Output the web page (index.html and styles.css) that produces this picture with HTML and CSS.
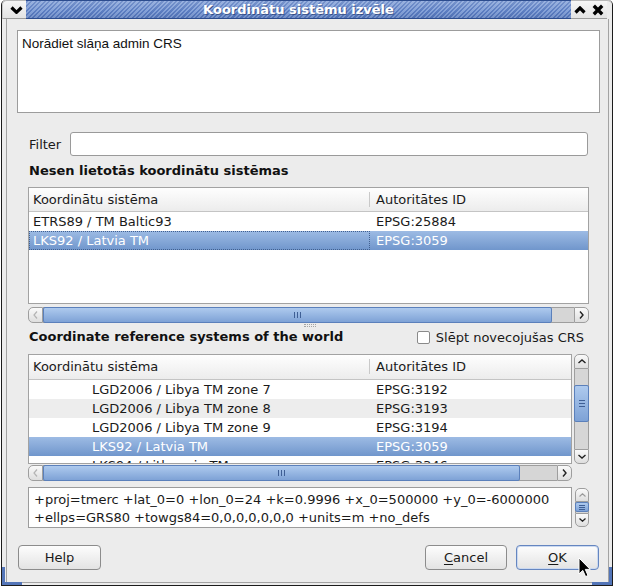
FILE: index.html
```html
<!DOCTYPE html>
<html lang="lv">
<head>
    <meta charset="UTF-8">
    <title>Koordinātu sistēmu izvēle</title>
    <link rel="stylesheet" href="styles.css">
</head>
<body>
    <div class="window">
        <div class="titlebar">
            <div class="tb-button tb-menu">
                <svg width="13" height="8" viewBox="0 0 13 8"><path d="M1.5 1.5 6.5 6.3 11.5 1.5" fill="none" stroke="#000" stroke-width="3.2"/></svg>
            </div>
            <div class="tb-title">Koordinātu sistēmu izvēle</div>
            <div class="tb-button">
                <svg width="12" height="8" viewBox="0 0 12 8"><path d="M1.5 6.5 6 2 10.5 6.5" fill="none" stroke="#000" stroke-width="3.2"/></svg>
            </div>
            <div class="tb-button">
                <svg width="12" height="12" viewBox="0 0 12 12"><path d="M1.8 1.8 10.2 10.2 M10.2 1.8 1.8 10.2" fill="none" stroke="#000" stroke-width="3.4"/></svg>
            </div>
            <div class="tb-tail"></div>
        </div>

        <div class="client">
            <div class="message">Norādiet slāņa admin CRS</div>

            <div class="panel">
                <div class="filter-row">
                    <span class="filter-label">Filter</span>
                    <div class="line-edit"></div>
                </div>

                <h2 class="group-title">Nesen lietotās koordinātu sistēmas</h2>

                <div class="tree tree-recent">
                    <div class="tree-header">
                        <div class="col col-name">Koordinātu sistēma</div>
                        <div class="col col-id">Autoritātes ID</div>
                    </div>
                    <div class="row">
                        <div class="col col-name">ETRS89 / TM Baltic93</div>
                        <div class="col col-id">EPSG:25884</div>
                    </div>
                    <div class="row selected">
                        <div class="col col-name focus">LKS92 / Latvia TM</div>
                        <div class="col col-id">EPSG:3059</div>
                    </div>
                </div>

                <div class="hscroll">
                    <div class="sb-btn sb-left">
                        <svg width="5" height="8" viewBox="0 0 5 8"><path d="M4 0.5 1 4 4 7.5" fill="none" stroke="#b4b4b4" stroke-width="1.2"/></svg>
                    </div>
                    <div class="sb-track">
                        <div class="sb-handle" style="width: 509px">
                            <svg width="7" height="6" viewBox="0 0 7 6"><path d="M0.5 0v6M3.5 0v6M6.5 0v6" stroke="#3f5f95" stroke-width="1"/></svg>
                        </div>
                    </div>
                    <div class="sb-btn sb-right">
                        <svg width="5" height="8" viewBox="0 0 5 8"><path d="M1 0.5 4 4 1 7.5" fill="none" stroke="#222" stroke-width="1.4"/></svg>
                    </div>
                </div>

                <div class="splitter"><span class="grip"></span></div>

                <div class="group-row">
                    <h2 class="group-title">Coordinate reference systems of the world</h2>
                    <label class="check">
                        <span class="check-box"></span>
                        Slēpt novecojušas CRS
                    </label>
                </div>

                <div class="tree-wrap">
                    <div class="tree tree-world">
                        <div class="tree-header tall">
                            <div class="col col-name">Koordinātu sistēma</div>
                            <div class="col col-id">Autoritātes ID</div>
                        </div>
                        <div class="row">
                            <div class="col col-name indent">LGD2006 / Libya TM zone 7</div>
                            <div class="col col-id">EPSG:3192</div>
                        </div>
                        <div class="row alt">
                            <div class="col col-name indent">LGD2006 / Libya TM zone 8</div>
                            <div class="col col-id">EPSG:3193</div>
                        </div>
                        <div class="row">
                            <div class="col col-name indent">LGD2006 / Libya TM zone 9</div>
                            <div class="col col-id">EPSG:3194</div>
                        </div>
                        <div class="row selected">
                            <div class="col col-name indent">LKS92 / Latvia TM</div>
                            <div class="col col-id">EPSG:3059</div>
                        </div>
                        <div class="row">
                            <div class="col col-name indent">LKS94 / Lithuania TM</div>
                            <div class="col col-id">EPSG:3346</div>
                        </div>
                    </div>

                    <div class="vscroll">
                        <div class="sb-btn sb-up">
                            <svg width="8" height="5" viewBox="0 0 8 5"><path d="M0.5 4 4 1 7.5 4" fill="none" stroke="#222" stroke-width="1.4"/></svg>
                        </div>
                        <div class="sb-track">
                            <div class="sb-handle" style="margin-top: 16px; height: 37px">
                                <svg width="6" height="7" viewBox="0 0 6 7"><path d="M0 0.5h6M0 3.5h6M0 6.5h6" stroke="#3f5f95" stroke-width="1"/></svg>
                            </div>
                        </div>
                        <div class="sb-btn sb-down">
                            <svg width="8" height="5" viewBox="0 0 8 5"><path d="M0.5 1 4 4 7.5 1" fill="none" stroke="#222" stroke-width="1.4"/></svg>
                        </div>
                    </div>
                </div>

                <div class="hscroll short">
                    <div class="sb-btn sb-left">
                        <svg width="5" height="8" viewBox="0 0 5 8"><path d="M4 0.5 1 4 4 7.5" fill="none" stroke="#b4b4b4" stroke-width="1.2"/></svg>
                    </div>
                    <div class="sb-track">
                        <div class="sb-handle" style="width: 477px">
                            <svg width="7" height="6" viewBox="0 0 7 6"><path d="M0.5 0v6M3.5 0v6M6.5 0v6" stroke="#3f5f95" stroke-width="1"/></svg>
                        </div>
                    </div>
                    <div class="sb-btn sb-right">
                        <svg width="5" height="8" viewBox="0 0 5 8"><path d="M1 0.5 4 4 1 7.5" fill="none" stroke="#222" stroke-width="1.4"/></svg>
                    </div>
                </div>

                <div class="proj-row">
                    <div class="proj-text">+proj=tmerc +lat_0=0 +lon_0=24 +k=0.9996 +x_0=500000 +y_0=-6000000<br>+ellps=GRS80 +towgs84=0,0,0,0,0,0,0 +units=m +no_defs</div>
                    <div class="vscroll mini">
                        <div class="sb-btn sb-up">
                            <svg width="7" height="4" viewBox="0 0 7 4"><path d="M0.5 3.5 3.5 0.8 6.5 3.5" fill="none" stroke="#9a9a9a" stroke-width="1.1"/></svg>
                        </div>
                        <div class="sb-track">
                            <div class="sb-handle" style="height: 10px">
                                <svg width="6" height="5" viewBox="0 0 6 5"><path d="M0 0.5h6M0 2.5h6M0 4.5h6" stroke="#3f5f95" stroke-width="1"/></svg>
                            </div>
                        </div>
                        <div class="sb-btn sb-down">
                            <svg width="7" height="4" viewBox="0 0 7 4"><path d="M0.5 0.5 3.5 3.2 6.5 0.5" fill="none" stroke="#222" stroke-width="1.3"/></svg>
                        </div>
                    </div>
                </div>
            </div>

            <div class="buttons">
                <button class="push">Help</button>
                <span class="spacer"></span>
                <button class="push cancel"><u>C</u>ancel</button>
                <button class="push default"><u>O</u>K</button>
            </div>
        </div>

        <!-- resize handles on the frame corners -->
        <span class="corner corner-left"></span>
        <span class="corner corner-right"></span>

        <!-- mouse pointer resting on OK -->
        <svg class="pointer" width="13" height="21" viewBox="0 0 13 21">
            <path d="M1 1 V17 L4.8 13.4 L7.6 19.6 L10 18.5 L7.3 12.4 L12.2 12.4 Z" fill="#000" stroke="#fff" stroke-width="1" stroke-linejoin="round"/>
        </svg>
    </div>
</body>
</html>
```

FILE: styles.css
```css
* {
    box-sizing: border-box;
}

body {
    margin: 0;
    background: #ffffff;
    font-family: "DejaVu Sans", sans-serif;
    font-size: 13px;
    color: #1a1a1a;
}

.window {
    position: relative;
    margin-left: 1px;
    width: 612px;
    height: 586px;
    background: #ececec;
    border: 1px solid #1c1c1c;
    border-top: none;
    border-radius: 5px 5px 0 0;
    display: flex;
    flex-direction: column;
}

/* title bar */
.titlebar {
    display: flex;
    height: 19px;
    flex: none;
}

.tb-button {
    width: 18px;
    display: flex;
    align-items: center;
    justify-content: center;
    background: linear-gradient(#f6f6f6, #e3e3e3);
    border-top: 1px solid #b8b8b8;
    border-bottom: 1px solid #9c9c9c;
}

.tb-menu {
    width: 24px;
    padding-left: 4px;
    border-radius: 5px 0 0 0;
    border-left: 1px solid #c8c8c8;
}

.tb-title {
    flex: 1;
    text-align: center;
    line-height: 17px;
    font-weight: bold;
    color: #ffffff;
    text-shadow: 1px 1px 0 rgba(20, 40, 90, 0.55);
    background:
        linear-gradient(rgba(255, 255, 255, 0.18), rgba(255, 255, 255, 0) 60%, rgba(0, 20, 70, 0.12)),
        repeating-linear-gradient(135deg, #5b7dc1 0 1.6px, #85a2d8 1.6px 3.2px);
    border-top: 1px solid #2c4c8e;
    border-bottom: 1px solid #2c4c8e;
}

.tb-tail {
    width: 5px;
    background: #ececec;
    border-radius: 0 5px 0 0;
    border-top: 1px solid #b8b8b8;
}

/* dialog area */
.client {
    flex: 1;
    margin: 0 3px 2px 4px;
    border: 1px solid #a3a3a3;
    border-top: none;
    padding: 11px 8px 0 10px;
}

.message {
    height: 83px;
    background: #ffffff;
    border: 1px solid #9c9c9c;
    padding: 4px 4px;
    font-family: "Liberation Sans", Arial, sans-serif;
    font-size: 13.5px;
    line-height: 17px;
    color: #111;
}

.panel {
    padding: 0 11px;
}

.filter-row {
    display: flex;
    align-items: center;
    margin-top: 19px;
    height: 24px;
    padding-left: 1px;
}

.filter-label {
    flex: 0 0 41px;
}

.line-edit {
    flex: 1;
    height: 24px;
    margin-right: 1px;
    background: #ffffff;
    border: 1px solid #9a9a9a;
    border-radius: 3px;
}

.group-title {
    margin: 6px 0 0;
    padding-left: 1px;
    font-size: 13px;
    font-weight: bold;
    line-height: 18px;
    color: #111;
}

/* tree views */
.tree {
    background: #ffffff;
    border: 1px solid #a2a2a2;
    overflow: hidden;
}

.tree-recent {
    height: 117px;
    margin-top: 7px;
}

.tree-header {
    display: flex;
    height: 24px;
    line-height: 23px;
    background: linear-gradient(#fefefe, #ececec);
    border-bottom: 1px solid #c4c4c4;
}

.tree-header.tall {
    height: 25px;
    line-height: 24px;
}

.tree-header .col-name {
    background: linear-gradient(#c9c9c9, #c9c9c9) right 4px / 1px 15px no-repeat;
}

.row {
    display: flex;
    height: 19px;
    line-height: 19px;
}

.row.alt {
    background: #ededed;
}

.row.selected {
    background: linear-gradient(#9dbbe4, #7096cc);
    color: #ffffff;
}

.col {
    white-space: nowrap;
    overflow: hidden;
}

.col-name {
    flex: 0 0 341px;
    padding-left: 4px;
}

.col-name.indent {
    padding-left: 63px;
}

.col-id {
    flex: 1;
    padding-left: 6px;
}

.focus {
    outline: 1px dotted #41608f;
    outline-offset: -1px;
}

/* scroll bars */
.hscroll {
    display: flex;
    height: 16px;
    margin-top: 3px;
}

.hscroll.short {
    margin-top: 1px;
    margin-right: 17px;
}

.sb-btn {
    flex: 0 0 15px;
    display: flex;
    align-items: center;
    justify-content: center;
    background: linear-gradient(#fafafa, #dedede);
    border: 1px solid #9e9e9e;
}

.sb-left {
    border-radius: 5px 0 0 5px;
}

.sb-right {
    border-radius: 0 5px 5px 0;
}

.sb-track {
    flex: 1;
    display: flex;
    background: #d6d6d6;
    border-top: 1px solid #9e9e9e;
    border-bottom: 1px solid #9e9e9e;
}

.sb-handle {
    display: flex;
    align-items: center;
    justify-content: center;
    background: linear-gradient(#aecaee, #7ea2d6);
    border: 1px solid #5b80bb;
    border-radius: 2px;
    margin: -1px 0;
}

.vscroll {
    display: flex;
    flex-direction: column;
    width: 15px;
}

.vscroll .sb-btn {
    flex: 0 0 15px;
}

.vscroll .sb-up {
    border-radius: 5px 5px 0 0;
}

.vscroll .sb-down {
    border-radius: 0 0 5px 5px;
}

.vscroll .sb-track {
    flex-direction: column;
    border: none;
    border-left: 1px solid #9e9e9e;
    border-right: 1px solid #9e9e9e;
}

.vscroll .sb-handle {
    margin: 0 -1px;
}

.vscroll.mini {
    width: 14px;
    height: 39px;
    margin-top: 1px;
}

.vscroll.mini .sb-btn {
    flex: 0 0 14px;
}

.splitter {
    height: 5px;
    display: flex;
    justify-content: center;
    align-items: center;
}

.grip {
    width: 12px;
    height: 3px;
    margin-left: 2px;
    border-top: 1px dotted #a4a4a4;
    border-bottom: 1px dotted #a4a4a4;
}

.group-row {
    display: flex;
    align-items: center;
    justify-content: space-between;
    height: 18px;
    padding-right: 5px;
}

.group-row .group-title {
    margin: 0;
}

.check {
    display: flex;
    align-items: center;
    color: #1a1a1a;
}

.check-box {
    width: 13px;
    height: 13px;
    margin-right: 6px;
    background: #ffffff;
    border: 1px solid #8a8a8a;
    border-radius: 2px;
}

.tree-wrap {
    display: flex;
    gap: 2px;
    height: 110px;
    margin-top: 8px;
}

.tree-world {
    flex: 1;
}

.proj-row {
    display: flex;
    gap: 3px;
    margin-top: 6px;
}

.proj-text {
    flex: 1;
    height: 41px;
    padding: 3px 5px 0;
    line-height: 18px;
    white-space: nowrap;
    background: #ffffff;
    border: 1px solid #9c9c9c;
}

/* button box */
.buttons {
    display: flex;
    margin-top: 17px;
    padding: 0 1px;
}

.spacer {
    flex: 1;
}

.push {
    width: 83px;
    height: 25px;
    padding: 0;
    font-family: "DejaVu Sans", sans-serif;
    font-size: 13px;
    color: #1a1a1a;
    background: linear-gradient(#fdfdfd, #e3e3e3);
    border: 1px solid #8c8c8c;
    border-radius: 4px;
}

.push.cancel {
    width: 82px;
    margin-right: 9px;
}

.push.default {
    border-color: #6586c0;
    box-shadow: inset 0 0 0 1px #cbd9f0;
}

.push u {
    text-decoration-thickness: 1px;
    text-underline-offset: 2px;
}

/* frame decorations */
.corner {
    position: absolute;
    bottom: 0;
    width: 20px;
    height: 18px;
    border-bottom: 3px solid #5375b8;
}

.corner-left {
    left: 0;
    border-left: 3px solid #5375b8;
}

.corner-right {
    right: 0;
    border-right: 3px solid #5375b8;
}

.pointer {
    position: absolute;
    left: 576px;
    top: 557px;
}
```
